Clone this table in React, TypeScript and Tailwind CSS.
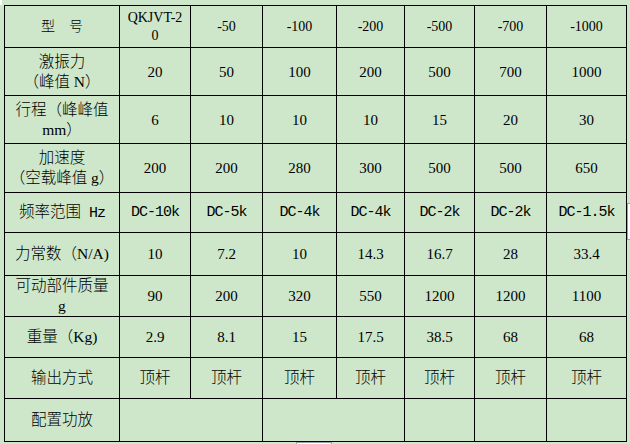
import React from "react";

const BG = "bg-[#cee7cb]";

const serif = { fontFamily: '"Liberation Serif", "Noto Sans CJK SC", serif' } as const;
const mono = { fontFamily: '"Liberation Mono", "Noto Sans CJK SC", monospace' } as const;

function C({ children, span, kind = "num" }: { children: React.ReactNode; span?: number; kind?: string }) {
  let cls = "text-[15px] leading-[20px]";
  let style: React.CSSProperties = serif;
  if (kind === "cjk") cls = "text-[15.5px] leading-[20px] font-light";
  if (kind === "head") cls = "text-[14px] leading-[18px] font-light";
  if (kind === "mono") {
    cls = "text-[15px] leading-[20px] tracking-[-1px]";
    style = mono;
  }
  return (
    <div
      className={`${BG} flex items-center justify-center text-center text-black ${cls} ${
        span === 2 ? "col-span-2" : ""
      }`}
      style={style}
    >
      <div>{children}</div>
    </div>
  );
}

export default function App() {
  const nums = (arr: string[], kind: string = "num") =>
    arr.map((v, i) => (
      <C key={i} kind={kind}>
        {v}
      </C>
    ));
  return (
    <div className={`relative w-[630px] h-[444px] ${BG} overflow-hidden`}>
      <div className="pt-[5px] pl-[4px]">
        <div className="grid w-fit gap-px bg-black border border-black grid-cols-[114px_70px_71px_73px_67px_69px_71px_79px] grid-rows-[41px_47px_47px_48px_39px_42px_40px_40px_40px_42px]">
          <C kind="head">型　号</C>
          <C kind="head">
            QKJVT-2
            <br />0
          </C>
          {nums(["-50", "-100", "-200", "-500", "-700", "-1000"], "head")}

          <C kind="cjk">
            激振力
            <br />
            （峰值 N）
          </C>
          {nums(["20", "50", "100", "200", "500", "700", "1000"])}

          <C kind="cjk">
            行程（峰峰值
            <br />
            mm）
          </C>
          {nums(["6", "10", "10", "10", "15", "20", "30"])}

          <C kind="cjk">
            加速度
            <br />
            （空载峰值 g）
          </C>
          {nums(["200", "200", "280", "300", "500", "500", "650"])}

          <C kind="cjk">
            频率范围<span style={mono} className="text-[15px] tracking-[-1px]"> Hz</span>
          </C>
          {nums(["DC-10k", "DC-5k", "DC-4k", "DC-4k", "DC-2k", "DC-2k", "DC-1.5k"], "mono")}

          <C kind="cjk">力常数（N/A)</C>
          {nums(["10", "7.2", "10", "14.3", "16.7", "28", "33.4"])}

          <C kind="cjk">
            可动部件质量
            <br />g
          </C>
          {nums(["90", "200", "320", "550", "1200", "1200", "1100"])}

          <C kind="cjk">重量（Kg)</C>
          {nums(["2.9", "8.1", "15", "17.5", "38.5", "68", "68"])}

          <C kind="cjk">输出方式</C>
          {nums(["顶杆", "顶杆", "顶杆", "顶杆", "顶杆", "顶杆", "顶杆"], "cjk")}

          <C kind="cjk">配置功放</C>
          <C span={2}>{""}</C>
          <C span={2}>{""}</C>
          <C>{""}</C>
          <C>{""}</C>
          <C>{""}</C>
        </div>
      </div>
      <div className="absolute left-[627px] top-[203px] w-[4px] h-[37px] bg-white border-l border-y border-gray-400" />
      <div className="absolute left-[296px] top-[442px] w-[36px] h-[3px] bg-white border-x border-t border-gray-400" />
      <div className="absolute left-0 top-0 w-[2px] h-[5px] bg-white" />
    </div>
  );
}
